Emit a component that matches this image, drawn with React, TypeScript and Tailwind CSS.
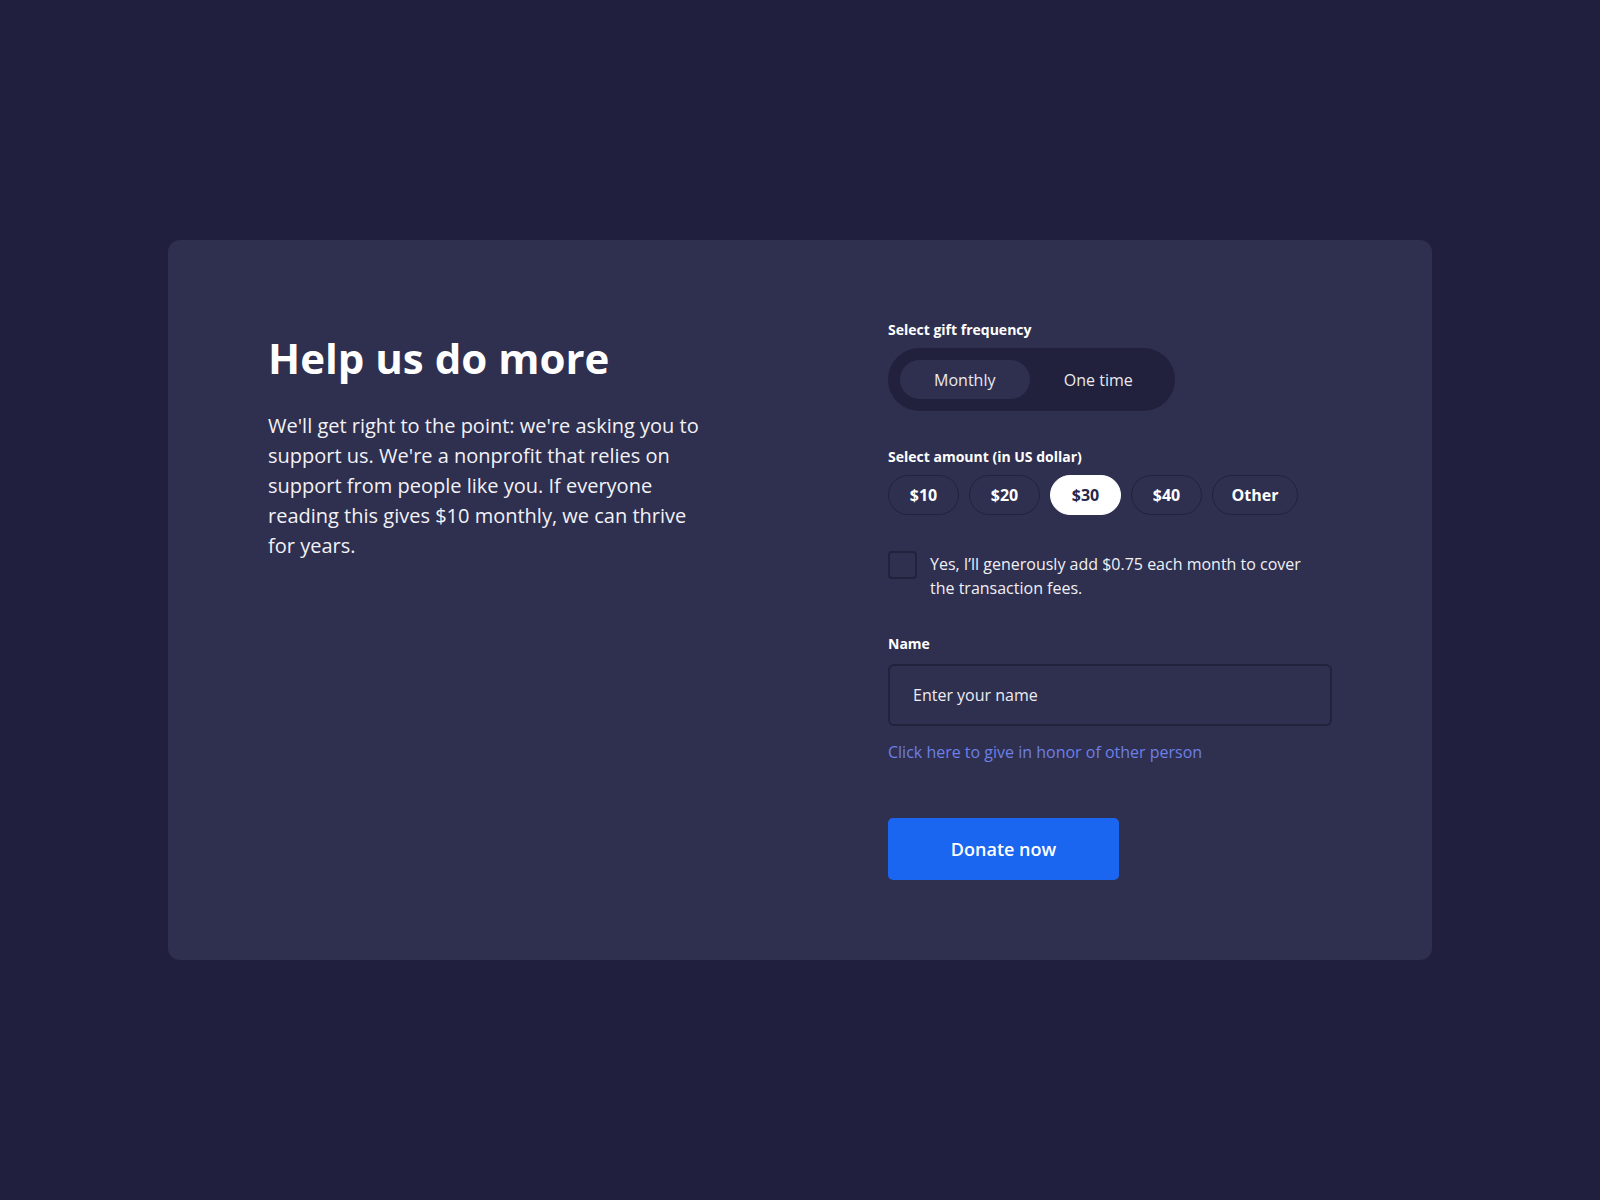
import { useState } from "react";

const amounts = ["$10", "$20", "$30", "$40", "Other"];

export default function App() {
  const [freq, setFreq] = useState("Monthly");
  const [amount, setAmount] = useState("$30");
  const [cover, setCover] = useState(false);

  return (
    <div
      className="min-h-screen w-full bg-[#20203e] flex items-center justify-center text-white"
      style={{ fontFamily: "'Open Sans', 'Noto Sans', sans-serif" }}
    >
      <div className="w-[1264px] h-[720px] rounded-xl bg-[#2f2f4f] px-[100px] pt-[80px] flex justify-between">
        <div className="w-[444px] pt-[12px]">
          <h1 className="text-[42px] leading-[52px] font-bold">Help us do more</h1>
          <p className="mt-[27px] text-[20px] leading-[30px] text-[#f2f2f7]">
            We'll get right to the point: we're asking you to support us. We're a nonprofit that relies on
            support from people like you. If everyone reading this gives $10 monthly, we can thrive for years.
          </p>
        </div>

        <div className="w-[444px]">
          <div className="text-[14px] leading-[20px] font-bold">Select gift frequency</div>
          <div className="mt-2 w-[287px] h-[63px] rounded-full bg-[#21213d] p-3 grid grid-cols-2 gap-1">
            {["Monthly", "One time"].map((f) => (
              <button
                key={f}
                onClick={() => setFreq(f)}
                className={`rounded-full text-[16px] text-[#e9e9f0] ${freq === f ? "bg-[#2f2f4f]" : ""}`}
              >
                {f}
              </button>
            ))}
          </div>

          <div className="mt-9 text-[14px] leading-[20px] font-bold">Select amount (in US dollar)</div>
          <div className="mt-2 flex gap-[10px]">
            {amounts.map((a) => (
              <button
                key={a}
                onClick={() => setAmount(a)}
                className={`h-[40px] rounded-full border text-[16px] font-bold ${
                  a === "Other" ? "w-[86px]" : "w-[71px]"
                } ${
                  amount === a
                    ? "bg-white border-white text-[#26264a]"
                    : "border-[#22223c] text-white"
                }`}
              >
                {a}
              </button>
            ))}
          </div>

          <label className="mt-[37px] flex items-start gap-[13px] cursor-pointer">
            <span
              onClick={() => setCover(!cover)}
              className={`mt-[-1px] w-[29px] h-[28px] shrink-0 rounded-[4px] border-2 border-[#22223c] ${
                cover ? "bg-[#1a66f0]" : ""
              }`}
            />
            <span className="w-[380px] text-[16px] leading-[24px] text-[#f0f0f5]">
              Yes, I’ll generously add $0.75 each month to cover the transaction fees.
            </span>
          </label>

          <div className="mt-[34px] text-[14px] leading-[20px] font-bold">Name</div>
          <input
            placeholder="Enter your name"
            className="mt-[10px] w-full h-[62px] rounded-md border-2 border-[#22223c] bg-transparent px-[23px] text-[16px] text-white placeholder:text-[#ececf2] outline-none"
          />
          <a href="#" className="mt-[14px] block text-[16px] leading-[24px] text-[#6c80e6]">
            Click here to give in honor of other person
          </a>

          <button className="mt-[54px] w-[231px] h-[62px] rounded-[5px] bg-[#1a66f0] text-[18px] font-semibold text-white">
            Donate now
          </button>
        </div>
      </div>
    </div>
  );
}
